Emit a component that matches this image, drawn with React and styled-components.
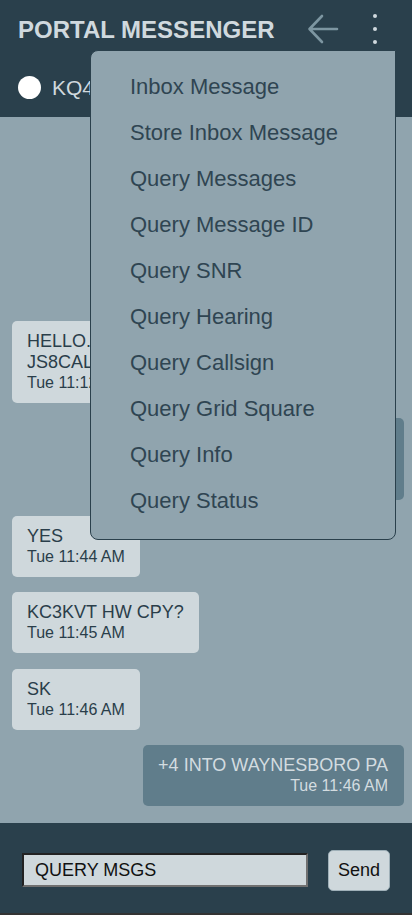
import React from "react";
import styled, { createGlobalStyle } from "styled-components";

const GlobalStyle = createGlobalStyle`
  * { box-sizing: border-box; }
  body {
    margin: 0;
    font-family: "Liberation Sans", Arial, sans-serif;
    background: #90a4ae;
  }
`;

const messages = [
  { mine: false, text: "HELLO. TRYING OUT JS8CALL MESSENGER", time: "Tue 11:12 AM" },
  { mine: true, text: "GM KC3KVT UR SIGNAL IS STRONG HERE", time: "Tue 11:43 AM" },
  { mine: false, text: "YES", time: "Tue 11:44 AM" },
  { mine: false, text: "KC3KVT HW CPY?", time: "Tue 11:45 AM" },
  { mine: false, text: "SK", time: "Tue 11:46 AM" },
  { mine: true, text: "+4 INTO WAYNESBORO PA", time: "Tue 11:46 AM" },
];

const menuItems = [
  "Inbox Message",
  "Store Inbox Message",
  "Query Messages",
  "Query Message ID",
  "Query SNR",
  "Query Hearing",
  "Query Callsign",
  "Query Grid Square",
  "Query Info",
  "Query Status",
];

const App = () => {
  return (
    <>
      <GlobalStyle />
      <Page>
        <Header>
          <TitleRow>
            <Title>PORTAL MESSENGER</Title>
            <BackButton aria-label="back">
              <svg width="32" height="30" viewBox="0 0 32 30" fill="none">
                <path
                  d="M30 15H3M15 2L2.5 15L15 28"
                  stroke="#7d96a1"
                  strokeWidth="2.6"
                  strokeLinecap="round"
                  strokeLinejoin="round"
                />
              </svg>
            </BackButton>
            <MenuButton aria-label="menu">
              <Dot />
              <Dot />
              <Dot />
            </MenuButton>
          </TitleRow>
          <StationRow>
            <StatusDot />
            <Callsign>KQ4ABC</Callsign>
          </StationRow>
        </Header>

        <Chat>
          {messages.map((m, i) => (
            <Bubble key={i} $mine={m.mine}>
              <BubbleText>{m.text}</BubbleText>
              <BubbleTime>{m.time}</BubbleTime>
            </Bubble>
          ))}
        </Chat>

        <Footer>
          <MessageInput defaultValue="QUERY MSGS" />
          <SendButton>Send</SendButton>
        </Footer>

        <Dropdown>
          {menuItems.map((item) => (
            <DropdownItem key={item}>{item}</DropdownItem>
          ))}
        </Dropdown>
      </Page>
    </>
  );
};

export default App;

const Page = styled.div`
  position: relative;
  width: 412px;
  height: 915px;
  display: flex;
  flex-direction: column;
  overflow: hidden;
`;

const Header = styled.header`
  background-color: #2a404c;
  height: 117px;
  display: flex;
  flex-direction: column;
`;

const TitleRow = styled.div`
  height: 60px;
  display: flex;
  align-items: center;
  padding: 0 0 0 18px;
`;

const Title = styled.h1`
  margin: 0;
  flex: 1;
  font-size: 24px;
  font-weight: 700;
  color: #d0d9de;
`;

const BackButton = styled.div`
  width: 32px;
  height: 30px;
  display: flex;
  margin-right: 30px;
  margin-top: -2px;
`;

const MenuButton = styled.div`
  width: 12px;
  display: flex;
  flex-direction: column;
  align-items: center;
  gap: 8.6px;
  margin-right: 31px;
  margin-top: -2px;
`;

const Dot = styled.span`
  width: 4.4px;
  height: 4.4px;
  border-radius: 50%;
  background-color: #d0d9de;
`;

const StationRow = styled.div`
  flex: 1;
  display: flex;
  align-items: center;
  gap: 11px;
  padding: 0 0 2px 18px;
`;

const StatusDot = styled.span`
  width: 23px;
  height: 23px;
  border-radius: 50%;
  background-color: #ffffff;
`;

const Callsign = styled.span`
  font-size: 21px;
  color: #d0d9de;
`;

const Chat = styled.main`
  flex: 1;
  background-color: #90a4ae;
  display: flex;
  flex-direction: column;
  justify-content: flex-end;
  gap: 15.5px;
  padding: 0 8px 17px 12px;
`;

const Bubble = styled.div`
  align-self: ${(p) => (p.$mine ? "flex-end" : "flex-start")};
  max-width: 270px;
  padding: 10px ${(p) => (p.$mine ? "16px" : "15px")} 10px 15px;
  border-radius: 5px;
  background-color: ${(p) => (p.$mine ? "#607d8b" : "#cfd8dc")};
  color: ${(p) => (p.$mine ? "#d3dce0" : "#2a3e4a")};
  text-align: ${(p) => (p.$mine ? "right" : "left")};
`;

const BubbleText = styled.div`
  font-size: 18px;
  line-height: 21px;
`;

const BubbleTime = styled.div`
  font-size: 16px;
  line-height: 20px;
`;

const Footer = styled.footer`
  height: 92px;
  background-color: #2a404c;
  border-bottom: 2px solid #333333;
  display: flex;
  align-items: center;
  gap: 20px;
  padding: 4px 22px 0 22px;
`;

const MessageInput = styled.input`
  width: 286px;
  height: 34px;
  padding: 0 11px;
  background-color: #cfd8dc;
  border-style: solid;
  border-width: 2px;
  border-color: #222222 #707070 #707070 #222222;
  font-family: "Liberation Sans", Arial, sans-serif;
  font-size: 18px;
  color: #111111;
  outline: none;
`;

const SendButton = styled.button`
  width: 62px;
  height: 41px;
  padding: 0;
  background-color: #cfd8dc;
  border: 1px solid #9fb0b8;
  border-radius: 5px;
  font-family: "Liberation Sans", Arial, sans-serif;
  font-size: 18px;
  color: #111111;
`;

const Dropdown = styled.ul`
  position: absolute;
  top: 50px;
  left: 90px;
  width: 306px;
  height: 490px;
  margin: 0;
  padding: 13px 0 15px 0;
  list-style: none;
  background-color: #90a4ae;
  border: 1px solid #2a404c;
  border-radius: 8px 0 8px 8px;
  z-index: 10;
`;

const DropdownItem = styled.li`
  height: 46px;
  line-height: 46px;
  padding-left: 39px;
  font-size: 22px;
  color: #2f4552;
  cursor: pointer;
`;
